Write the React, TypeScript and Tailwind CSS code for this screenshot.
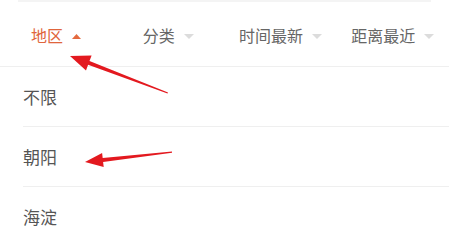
import { ReactNode } from 'react';

const tabs = [
  { label: '地区', active: true },
  { label: '分类', active: false },
  { label: '时间最新', active: false },
  { label: '距离最近', active: false },
];

const areas = ['不限', '朝阳', '海淀'];

function Caret({ up }: { up: boolean }) {
  return up ? (
    <svg width="9" height="5" viewBox="0 0 9 5" className="ml-[9px] mt-[2px]">
      <polygon points="4.5,0 9,5 0,5" fill="#e46a3f" />
    </svg>
  ) : (
    <svg width="10" height="5" viewBox="0 0 10 5" className="ml-[9px] mt-[2px]">
      <polygon points="0,0 10,0 5,5" fill="#dcdcdc" />
    </svg>
  );
}

function Row({ children, last }: { children: ReactNode; last?: boolean }) {
  return (
    <div className="pl-[23px]">
      <div className={`h-[60px] flex items-center text-[17px] text-[#555] ${last ? '' : 'border-b border-[#efefef]'}`}>
        {children}
      </div>
    </div>
  );
}

export default function App() {
  return (
    <div
      className="relative w-[449px] h-[249px] bg-white overflow-hidden"
      style={{ fontFamily: '"Noto Sans CJK SC", "Noto Sans", sans-serif' }}
    >
      <div className="mx-[18px] h-[2px] bg-[#f4f4f4]" />

      <div className="grid grid-cols-4 h-[65px] border-b border-[#efefef]">
        {tabs.map((t) => (
          <div key={t.label} className="flex items-center justify-center pt-[2px]">
            <span className={`text-[16px] ${t.active ? 'text-[#e0653c]' : 'text-[#666]'}`}>{t.label}</span>
            <Caret up={t.active} />
          </div>
        ))}
      </div>

      <div>
        {areas.map((a, i) => (
          <Row key={a} last={i === areas.length - 1}>
            {a}
          </Row>
        ))}
      </div>

      <svg className="absolute inset-0 pointer-events-none" width="449" height="249" viewBox="0 0 449 249">
        <polygon points="168,92.5 89.5,61 91.6,55.4 70,56 86,70.4 88.1,64.8 167.5,93.5" fill="#e3191f" />
        <polygon points="172,151.5 102.7,158 102.1,153 85,162 103.7,166.9 103.1,162 172,152.8" fill="#e3191f" />
      </svg>
    </div>
  );
}
